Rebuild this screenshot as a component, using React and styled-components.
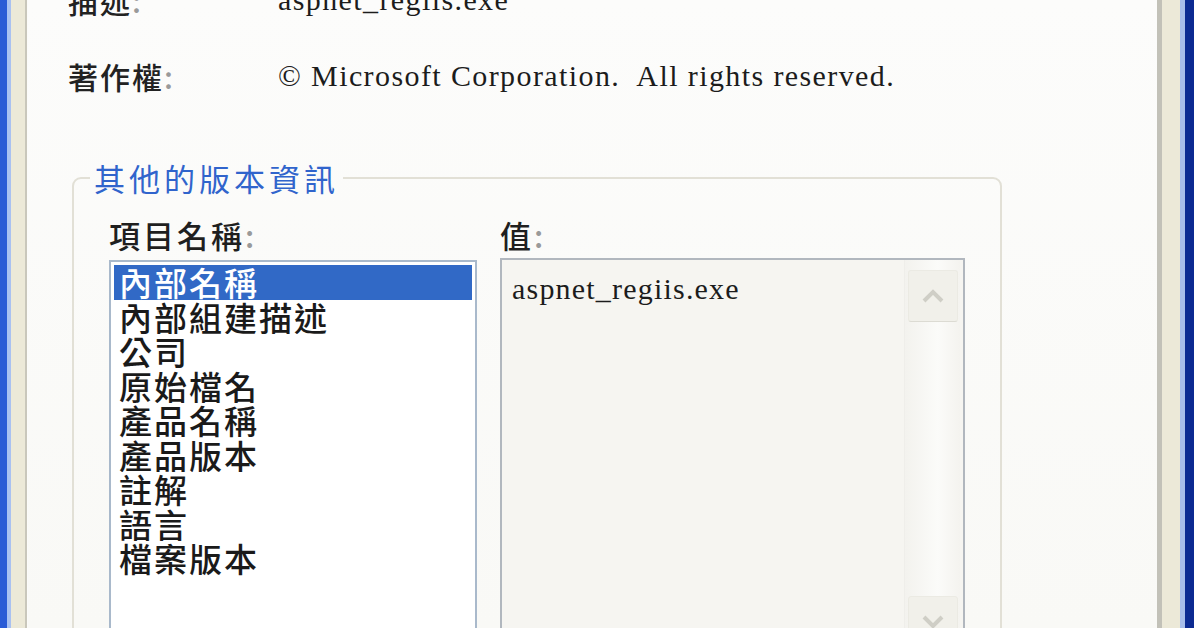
import React from 'react';
import styled, { createGlobalStyle } from 'styled-components';

const GlobalStyle = createGlobalStyle`
  html, body {
    margin: 0;
    padding: 0;
    width: 1194px;
    height: 628px;
    overflow: hidden;
    background: #fbfbf9;
  }
  #root {
    height: 628px;
  }
`;

const cjk = `"Noto Sans CJK TC", "Noto Sans CJK SC", sans-serif`;
const serif = `"Liberation Serif", "Noto Sans CJK TC", serif`;

const Frame = styled.div`
  display: flex;
  height: 628px;
  overflow: hidden;
`;

// window edge + dialog face, drawn as hard colour stops
const Edge = styled.div`
  flex: 0 0 ${props => props.side === 'left' ? '28px' : '37px'};
  background: ${props => props.side === 'left'
    ? 'linear-gradient(to right, #2a5bd6 0 7px, #a9c1f1 7px 11px, #ece9d8 11px 25px, #c9c7bb 25px 27px, #fbfbf9 27px)'
    : 'linear-gradient(to right, #c2c1b8 0 5px, #ece9d8 5px 23px, #a8bdea 23px 28px, #0c2a92 28px)'};
`;

const Panel = styled.div`
  flex: 1;
  padding: 0 40px;
  background: linear-gradient(to bottom, #fcfcfb, #f9f9f6);
  overflow: hidden;
`;

const Fields = styled.div`
  margin-top: -38px;
`;

const FieldRow = styled.div`
  display: grid;
  grid-template-columns: 210px 1fr;
  height: 76px;
  align-items: center;
`;

const FieldLabel = styled.div`
  font-family: ${cjk};
  font-size: 30px;
  font-weight: 500;
  letter-spacing: 2px;
  color: #222;
  span {
    color: #9a9a9a;
  }
`;

const FieldValue = styled.div`
  font-family: ${serif};
  font-size: 30px;
  letter-spacing: 1.4px;
  color: #1c1c1c;
  white-space: pre;
`;

const Group = styled.fieldset`
  margin: 44px 0 0 4px;
  width: 926px;
  box-sizing: border-box;
  padding: 0 35px;
  border: 2px solid #e2e0d6;
  border-radius: 9px;
  min-height: 520px;
`;

const Legend = styled.legend`
  margin-left: -19px;
  padding: 0 4px;
  font-family: ${cjk};
  font-size: 31px;
  letter-spacing: 4px;
  line-height: 40px;
  color: #3064cc;
`;

const Columns = styled.div`
  display: grid;
  grid-template-columns: 368px 465px;
  column-gap: 23px;
  margin-top: 18px;
`;

const ColumnLabel = styled.div`
  font-family: ${cjk};
  font-size: 31px;
  font-weight: 500;
  letter-spacing: 3px;
  line-height: 38px;
  color: #1f1f1f;
  margin-bottom: 6px;
  span {
    color: #9a9a9a;
  }
`;

const ListBox = styled.div`
  height: 380px;
  border: 2px solid #a9b9cb;
  background: #fff;
  padding: 3px;
`;

const ListItem = styled.div`
  font-family: ${cjk};
  font-size: 33px;
  font-weight: 500;
  letter-spacing: 2px;
  line-height: 34.5px;
  height: 34.5px;
  padding-left: 5px;
  color: ${props => props.selected ? '#fff' : '#1a1a1a'};
  background: ${props => props.selected ? '#3169c6' : 'transparent'};
  overflow: hidden;
  white-space: nowrap;
`;

const ValueBox = styled.div`
  display: flex;
  height: 370px;
  margin-top: -2px;
  border: 2px solid #b1b7be;
  background: #f6f5f1;
`;

const ValueText = styled.div`
  flex: 1;
  padding: 12px 0 0 10px;
  font-family: ${serif};
  font-size: 30px;
  letter-spacing: 1.2px;
  line-height: 34px;
  color: #1c1c1c;
`;

const ScrollBar = styled.div`
  flex: 0 0 55px;
  margin-right: 3px;
  display: flex;
  flex-direction: column;
  justify-content: space-between;
  align-items: center;
  padding: 10px 0 0;
  background: linear-gradient(to right, #f3f2ee, #fbfbf9 60%, #f4f3ef);
  border-left: 1px solid #efeeea;
`;

const ScrollButton = styled.div`
  width: 48px;
  height: 50px;
  display: flex;
  align-items: center;
  justify-content: center;
  background: #f1f0ea;
  border: 1px solid #ebeae3;
  border-bottom-color: ${props => props.dir === 'up' ? '#dcdbd3' : '#ebeae3'};
  border-radius: 3px;
  margin-bottom: ${props => props.dir === 'down' ? '-18px' : '0'};
`;

const Chevron = ({ dir }) => (
  <svg width="24" height="14" viewBox="0 0 24 14">
    <path
      d={dir === 'up' ? 'M3 12 L12 3 L21 12' : 'M3 2 L12 11 L21 2'}
      fill="none"
      stroke="#cfcec6"
      strokeWidth="4"
    />
  </svg>
);

const items = [
  '內部名稱',
  '內部組建描述',
  '公司',
  '原始檔名',
  '產品名稱',
  '產品版本',
  '註解',
  '語言',
  '檔案版本',
];

export default function App() {
  return (
    <>
      <GlobalStyle />
      <Frame>
        <Edge side="left" />
        <Panel>
          <Fields>
            <FieldRow>
              <FieldLabel>描述<span>:</span></FieldLabel>
              <FieldValue>aspnet_regiis.exe</FieldValue>
            </FieldRow>
            <FieldRow>
              <FieldLabel>著作權<span>:</span></FieldLabel>
              <FieldValue>© Microsoft Corporation.  All rights reserved.</FieldValue>
            </FieldRow>
          </Fields>
          <Group>
            <Legend>其他的版本資訊</Legend>
            <Columns>
              <div>
                <ColumnLabel>項目名稱<span>:</span></ColumnLabel>
                <ListBox>
                  {items.map((it, i) => (
                    <ListItem key={it} selected={i === 0}>{it}</ListItem>
                  ))}
                </ListBox>
              </div>
              <div>
                <ColumnLabel>值<span>:</span></ColumnLabel>
                <ValueBox>
                  <ValueText>aspnet_regiis.exe</ValueText>
                  <ScrollBar>
                    <ScrollButton dir="up"><Chevron dir="up" /></ScrollButton>
                    <ScrollButton dir="down"><Chevron dir="down" /></ScrollButton>
                  </ScrollBar>
                </ValueBox>
              </div>
            </Columns>
          </Group>
        </Panel>
        <Edge side="right" />
      </Frame>
    </>
  );
}
